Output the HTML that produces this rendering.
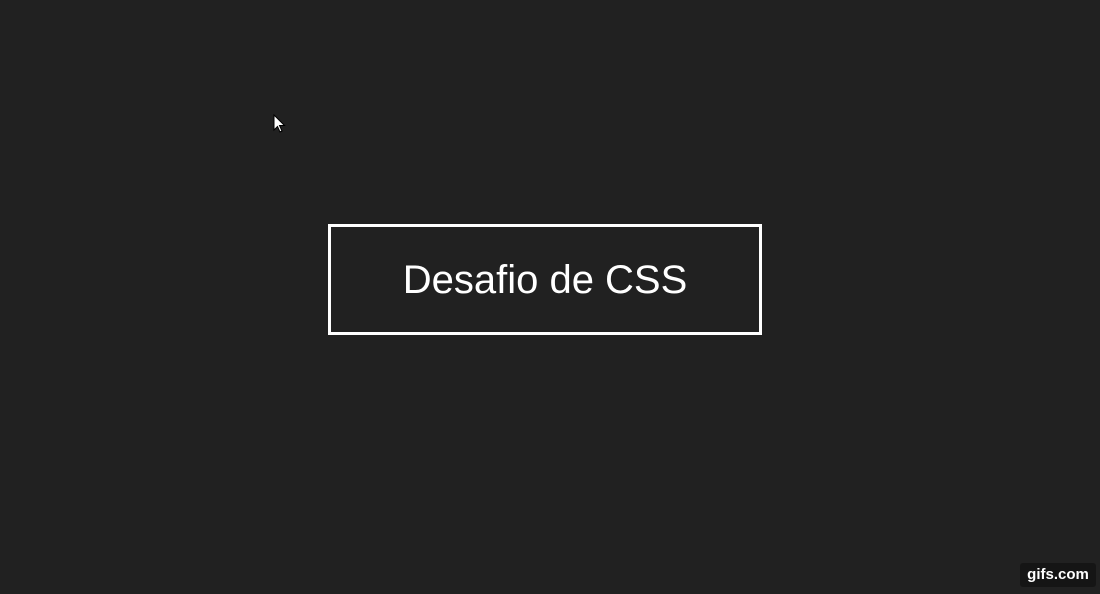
<!DOCTYPE html>
<html><head><style>
html,body{margin:0;padding:0;width:1100px;height:594px;background:#212121;overflow:hidden;position:relative;font-family:"Liberation Sans",Arial,sans-serif}
.box{position:absolute;left:328px;top:224px;width:428px;height:105px;border:3px solid #fff;display:flex;align-items:center;justify-content:center;color:#fff;font-size:40px}
.badge{position:absolute;left:1020px;top:563px;width:76px;height:24px;background:#151515;border-radius:3px;color:#fff;font-weight:bold;font-size:15px;line-height:24px;text-align:center}
.cur{position:absolute;left:273px;top:114px}
</style></head><body>
<svg class="cur" width="14" height="20" viewBox="0 0 14 20"><path d="M1 1 L1 16 L4.5 12.5 L7 18 L9 17 L6.5 11.5 L11.5 11.5 Z" fill="#fff" stroke="#000" stroke-width="1"/></svg>
<div class="box"><span style="margin-top:2px">Desafio de CSS</span></div>
<div class="badge">gifs.com</div>
</body></html>
